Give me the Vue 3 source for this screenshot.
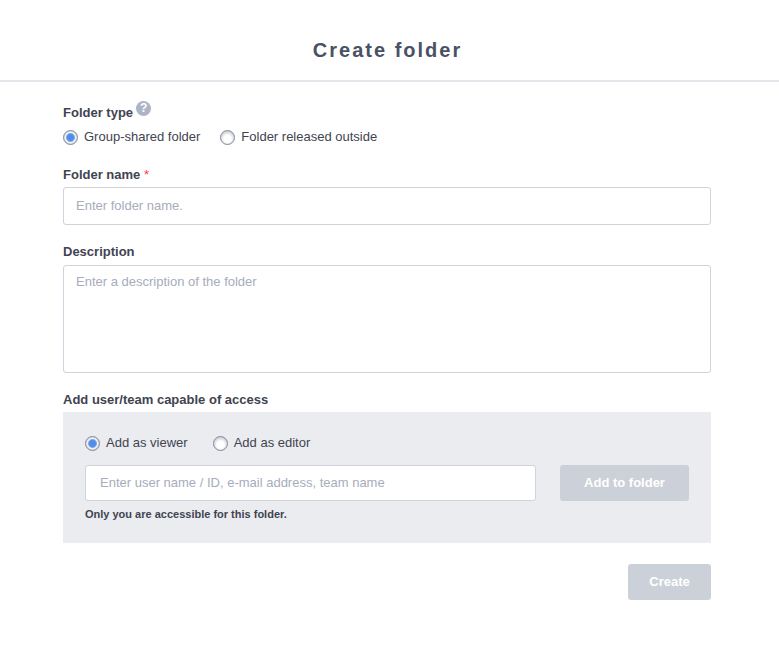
<template>
  <div class="create-folder">
    <header class="header">
      <h1>Create folder</h1>
    </header>

    <form class="form" @submit.prevent>
      <fieldset class="field type">
        <legend class="label">
          Folder type
          <button type="button" class="help" aria-label="About folder types">?</button>
        </legend>
        <div class="options">
          <label v-for="item in folderTypes" :key="item.value" class="option">
            <input v-model="folderType" type="radio" name="type" :value="item.value" />
            <span>{{ item.label }}</span>
          </label>
        </div>
      </fieldset>

      <div class="field">
        <label class="label" for="name">Folder name <span class="required">*</span></label>
        <input id="name" v-model="name" class="control" type="text" placeholder="Enter folder name." />
      </div>

      <div class="field description">
        <label class="label" for="description">Description</label>
        <textarea
          id="description"
          v-model="description"
          class="control"
          placeholder="Enter a description of the folder"
        ></textarea>
      </div>

      <fieldset class="field access">
        <legend class="label">Add user/team capable of access</legend>
        <div class="panel">
          <div class="options roles">
            <label v-for="item in roles" :key="item.value" class="option">
              <input v-model="role" type="radio" name="role" :value="item.value" />
              <span>{{ item.label }}</span>
            </label>
          </div>
          <div class="add-row">
            <input
              v-model="member"
              class="control"
              type="text"
              aria-label="User or team"
              placeholder="Enter user name / ID, e-mail address, team name"
            />
            <button type="button" class="btn add" :disabled="!member">Add to folder</button>
          </div>
          <p class="note">Only you are accessible for this folder.</p>
        </div>
      </fieldset>

      <div class="actions">
        <button type="submit" class="btn create" :disabled="!name">Create</button>
      </div>
    </form>
  </div>
</template>

<script setup>
import { ref } from 'vue';

const folderTypes = [
  { value: 'group', label: 'Group-shared folder' },
  { value: 'outside', label: 'Folder released outside' },
];
const roles = [
  { value: 'viewer', label: 'Add as viewer' },
  { value: 'editor', label: 'Add as editor' },
];

const folderType = ref('group');
const role = ref('viewer');
const name = ref('');
const description = ref('');
const member = ref('');
</script>

<style>
body {
  margin: 0;
  background: #fff;
}
</style>

<style scoped>
.create-folder,
.create-folder input,
.create-folder textarea,
.create-folder button {
  box-sizing: border-box;
  font-family: "Liberation Sans", Arial, sans-serif;
  font-size: 13px;
}

.create-folder {
  color: #3f4450;
}

.header {
  border-bottom: 2px solid #e4e4ea;
  padding: 38px 0 18px;
  text-align: center;
}

.create-folder h1 {
  color: #495264;
  font-size: 20px;
  letter-spacing: 2px;
  line-height: 24px;
  margin: 0;
  padding-right: 4px;
}

.form {
  padding: 23px 68px 40px 63px;
}

.field {
  border: 0;
  margin: 0 0 19px;
  min-width: 0;
  padding: 0;
}

.label {
  display: block;
  font-weight: bold;
  line-height: 16px;
  margin-bottom: 4px;
  padding: 0;
}

.type {
  margin-bottom: 22px;
}

.type .label {
  display: flex;
  gap: 3px;
  margin-bottom: 9px;
}

.description .label {
  margin-bottom: 5px;
}

.create-folder .help {
  background: #aeb4c8;
  border: 0;
  border-radius: 50%;
  color: #fff;
  font-size: 12px;
  font-weight: bold;
  height: 15px;
  line-height: 15px;
  margin-top: -4px;
  padding: 0;
  width: 15px;
}

.required {
  color: #ff3b3b;
  font-weight: normal;
}

.options {
  display: flex;
  gap: 20px;
}

.option {
  align-items: center;
  display: flex;
  gap: 6px;
  line-height: 15px;
}

.option span {
  margin-top: -2px;
}

input[type="radio"] {
  appearance: none;
  background: radial-gradient(circle at 50% 60%, #fff 35%, #c6c7cc 80%);
  border: 1px solid #808aa0;
  border-radius: 50%;
  flex: none;
  height: 15px;
  margin: 0;
  width: 15px;
}

input[type="radio"]:checked {
  background: radial-gradient(circle, #4f8de8 3px, #7fabee 4px, #f4f4f6 5px, #c8c9d0 7px);
}

.control {
  background: #fff;
  border: 1px solid #d0d2dc;
  border-radius: 3px;
  color: #3f4450;
  display: block;
  height: 38px;
  outline: 0;
  padding: 0 12px 2px;
  width: 100%;
}

.control::placeholder {
  color: #a6adbb;
  opacity: 1;
}

textarea.control {
  height: 108px;
  line-height: 16px;
  padding: 8px 12px;
  resize: none;
}

.access {
  margin-bottom: 21px;
}

.panel {
  background: #ebecf0;
  padding: 24px 22px 22px;
}

.roles {
  gap: 25px;
  margin-bottom: 14px;
}

.add-row {
  display: flex;
  gap: 24px;
}

.add-row .control {
  flex: 1;
  height: 36px;
  min-width: 0;
  padding: 0 14px 2px;
}

.btn {
  background: #ccd0d9;
  border: 0;
  border-radius: 3px;
  color: #fff;
  flex: none;
  font-weight: bold;
  height: 36px;
  padding: 0 0 2px;
}

.add {
  width: 129px;
}

.note {
  font-size: 11px;
  font-weight: bold;
  line-height: 14px;
  margin: 6px 0 0;
}

.actions {
  display: flex;
  justify-content: flex-end;
}

.create {
  width: 83px;
}
</style>
